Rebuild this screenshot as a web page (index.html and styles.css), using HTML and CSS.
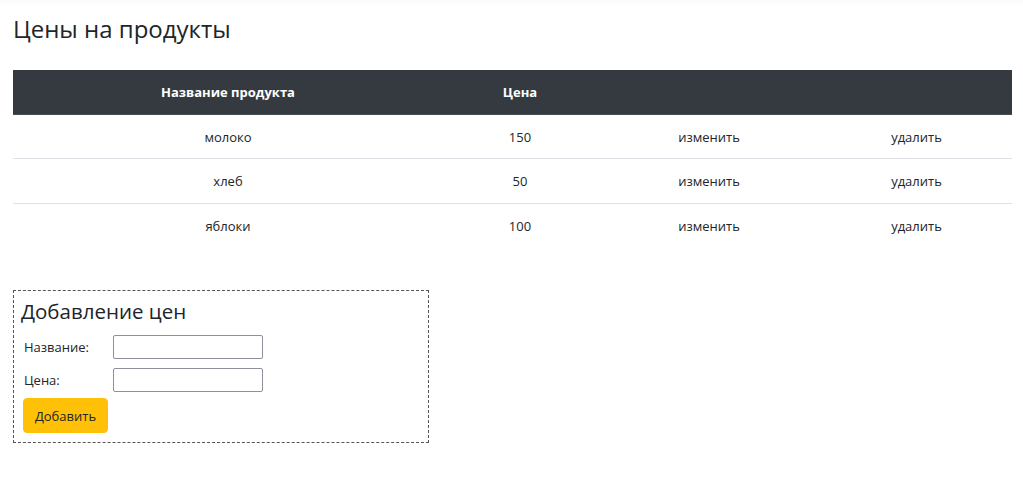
FILE: index.html
```html
<!DOCTYPE html>
<html lang="ru">
<head>
<meta charset="utf-8">
<title>Цены на продукты</title>
<link rel="stylesheet" href="styles.css">
</head>
<body>
<div class="topbar"></div>
<main class="page">
  <h1 class="title">Цены на продукты</h1>
  <table class="prices">
    <thead>
      <tr>
        <th class="c-name">Название продукта</th>
        <th class="c-price">Цена</th>
        <th class="c-edit"></th>
        <th class="c-del"></th>
      </tr>
    </thead>
    <tbody>
      <tr><td>молоко</td><td>150</td><td>изменить</td><td>удалить</td></tr>
      <tr><td>хлеб</td><td>50</td><td>изменить</td><td>удалить</td></tr>
      <tr><td>яблоки</td><td>100</td><td>изменить</td><td>удалить</td></tr>
    </tbody>
  </table>
  <form class="addbox">
    <h2 class="addbox-title">Добавление цен</h2>
    <div class="field">
      <label class="field-label">Название:</label>
      <input class="field-input" type="text">
    </div>
    <div class="field">
      <label class="field-label">Цена:</label>
      <input class="field-input" type="text">
    </div>
    <button class="btn-add" type="button">Добавить</button>
  </form>
</main>
</body>
</html>
```
FILE: styles.css
```css
html, body {
  margin: 0;
  padding: 0;
  background: #fff;
  font-family: "Open Sans", "Noto Sans", sans-serif;
  color: #212529;
}
.topbar {
  height: 0;
  box-shadow: 0 0 6px 1px rgba(0,0,0,0.08);
}
.page {
  padding: 0 11px 0 13px;
}
.title {
  margin: 0;
  padding-top: 14px;
  font-size: 24px;
  font-weight: 400;
  line-height: 30px;
  height: 56px;
}
.prices {
  width: 999px;
  border-collapse: collapse;
  font-size: 13px;
}
.prices th {
  background: #343a40;
  color: #fff;
  font-weight: 700;
  height: 44px;
  padding: 0;
  text-align: center;
  border-bottom: 1px solid #454d55;
}
.prices td {
  height: 44px;
  padding: 0;
  text-align: center;
  border-top: 1px solid #dee2e6;
}
.prices tbody tr:first-child td {
  border-top: none;
  height: 43px;
}
.c-name { width: 430px; }
.c-price { width: 154px; }
.c-edit { width: 224px; }
.c-del { width: 191px; }
.addbox {
  margin-top: 42px;
  width: 400px;
  border: 1px dashed #555;
  padding: 6px 7px 9px 7px;
}
.addbox-title {
  margin: 0 0 10px 0;
  font-size: 20.5px;
  font-weight: 400;
  line-height: 28px;
}
.field {
  display: flex;
  align-items: center;
  margin-bottom: 9px;
}
.field-label {
  width: 92px;
  padding-left: 3px;
  font-size: 13px;
  box-sizing: border-box;
}
.field-input {
  width: 150px;
  height: 24px;
  box-sizing: border-box;
  border: 1px solid #8f8f9d;
  border-radius: 2px;
  margin: 0;
  padding: 1px 4px;
}
.btn-add {
  margin-top: -3px;
  width: 85px;
  height: 35px;
  margin-left: 2px;
  background: #ffc107;
  border: 1px solid #ffc107;
  border-radius: 4px;
  font-family: "Open Sans", "Noto Sans", sans-serif;
  font-size: 13px;
  color: #212529;
  padding: 0;
}
```
